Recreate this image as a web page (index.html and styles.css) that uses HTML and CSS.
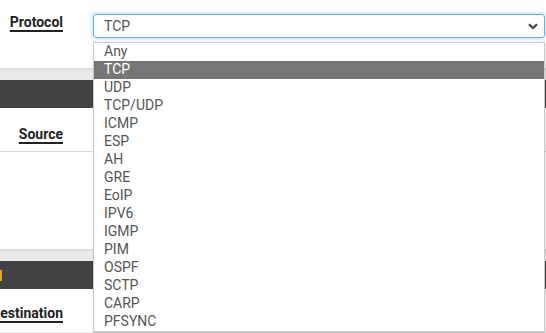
FILE: index.html
```html
<!DOCTYPE html>
<html lang="en">
<head>
  <meta charset="UTF-8">
  <meta name="viewport" content="width=device-width, initial-scale=1.0">
  <title>Edit Firewall Rule</title>
  <link rel="stylesheet" href="styles.css">
</head>
<body>
  <div class="page">
    <div class="panel">
      <div class="row row-protocol">
        <div class="label"><span>Protocol</span></div>
        <div class="field">
          <div class="select">
            <span>TCP</span>
            <svg class="chevron" width="10" height="7" viewBox="0 0 10 7">
              <path d="M1 1.2 L5 5 L9 1.2" fill="none" stroke="#444" stroke-width="2.2"/>
            </svg>
          </div>
        </div>
      </div>
    </div>

    <div class="gap"></div>

    <div class="panel">
      <div class="heading"></div>
      <div class="row row-source">
        <div class="label"><span>Source</span></div>
      </div>
      <div class="body-space"></div>
    </div>

    <div class="gap"></div>

    <div class="panel">
      <div class="heading"><i class="icon"></i></div>
      <div class="row row-dest">
        <div class="label"><span>Destination</span></div>
      </div>
    </div>

    <ul class="options">
      <li>Any</li>
      <li class="selected">TCP</li>
      <li>UDP</li>
      <li>TCP/UDP</li>
      <li>ICMP</li>
      <li>ESP</li>
      <li>AH</li>
      <li>GRE</li>
      <li>EoIP</li>
      <li>IPV6</li>
      <li>IGMP</li>
      <li>PIM</li>
      <li>OSPF</li>
      <li>SCTP</li>
      <li>CARP</li>
      <li>PFSYNC</li>
    </ul>
  </div>
</body>
</html>
```

FILE: styles.css
```css
* {
  box-sizing: border-box;
}
body {
  margin: 0;
  font-family: Roboto, 'Liberation Sans', sans-serif;
  font-size: 14px;
  background-color: #ffffff;
  color: #222;
  overflow: hidden;
}
.page {
  position: relative;
  width: 546px;
  height: 333px;
  background-color: #ebebeb;
}
.panel {
  background-color: #ffffff;
}
.gap {
  height: 12px;
  background-color: #ebebeb;
  box-shadow: inset 0 3px 3px -1px rgba(0, 0, 0, 0.07);
}
.heading {
  height: 28px;
  background-color: #424242;
  display: flex;
  align-items: center;
}
.icon {
  display: block;
  width: 2px;
  height: 11px;
  margin-top: 1px;
  background-color: #f0a30a;
}
.row {
  display: flex;
  align-items: flex-start;
}
.label {
  width: 63px;
  display: flex;
  justify-content: flex-end;
  white-space: nowrap;
  font-weight: 700;
  line-height: 20px;
}
.label span {
  text-decoration: underline;
  text-decoration-thickness: 2px;
  text-underline-offset: 3px;
}
.row-protocol {
  height: 68px;
}
.row-protocol .label {
  margin-top: 12px;
}
.field {
  margin-left: 30px;
  flex: 1;
  padding-right: 1px;
}
.select {
  margin-top: 14px;
  height: 24px;
  border: 1px solid #66afe9;
  border-radius: 3px;
  box-shadow: 0 0 5px rgba(102, 175, 233, 0.6);
  display: flex;
  align-items: center;
  justify-content: space-between;
  padding: 0 6px 0 10px;
  color: #555;
}
.chevron {
  display: block;
}
.row-source {
  height: 44px;
  border-bottom: 1px solid #dddddd;
}
.row-source .label {
  margin-top: 16px;
}
.body-space {
  height: 97px;
}
.row-dest {
  height: 43px;
}
.row-dest .label {
  margin-top: 14px;
}
.options {
  position: absolute;
  top: 42px;
  left: 93px;
  width: 452px;
  margin: 0;
  padding: 0;
  list-style: none;
  background-color: #ffffff;
  border: 1px solid #c8c8c8;
  box-shadow: 1px 2px 3px rgba(0, 0, 0, 0.15);
  color: #555;
}
.options li {
  height: 18px;
  line-height: 17px;
  padding-left: 10px;
}
.options li.selected {
  background-color: #767676;
  color: #ffffff;
}
```
